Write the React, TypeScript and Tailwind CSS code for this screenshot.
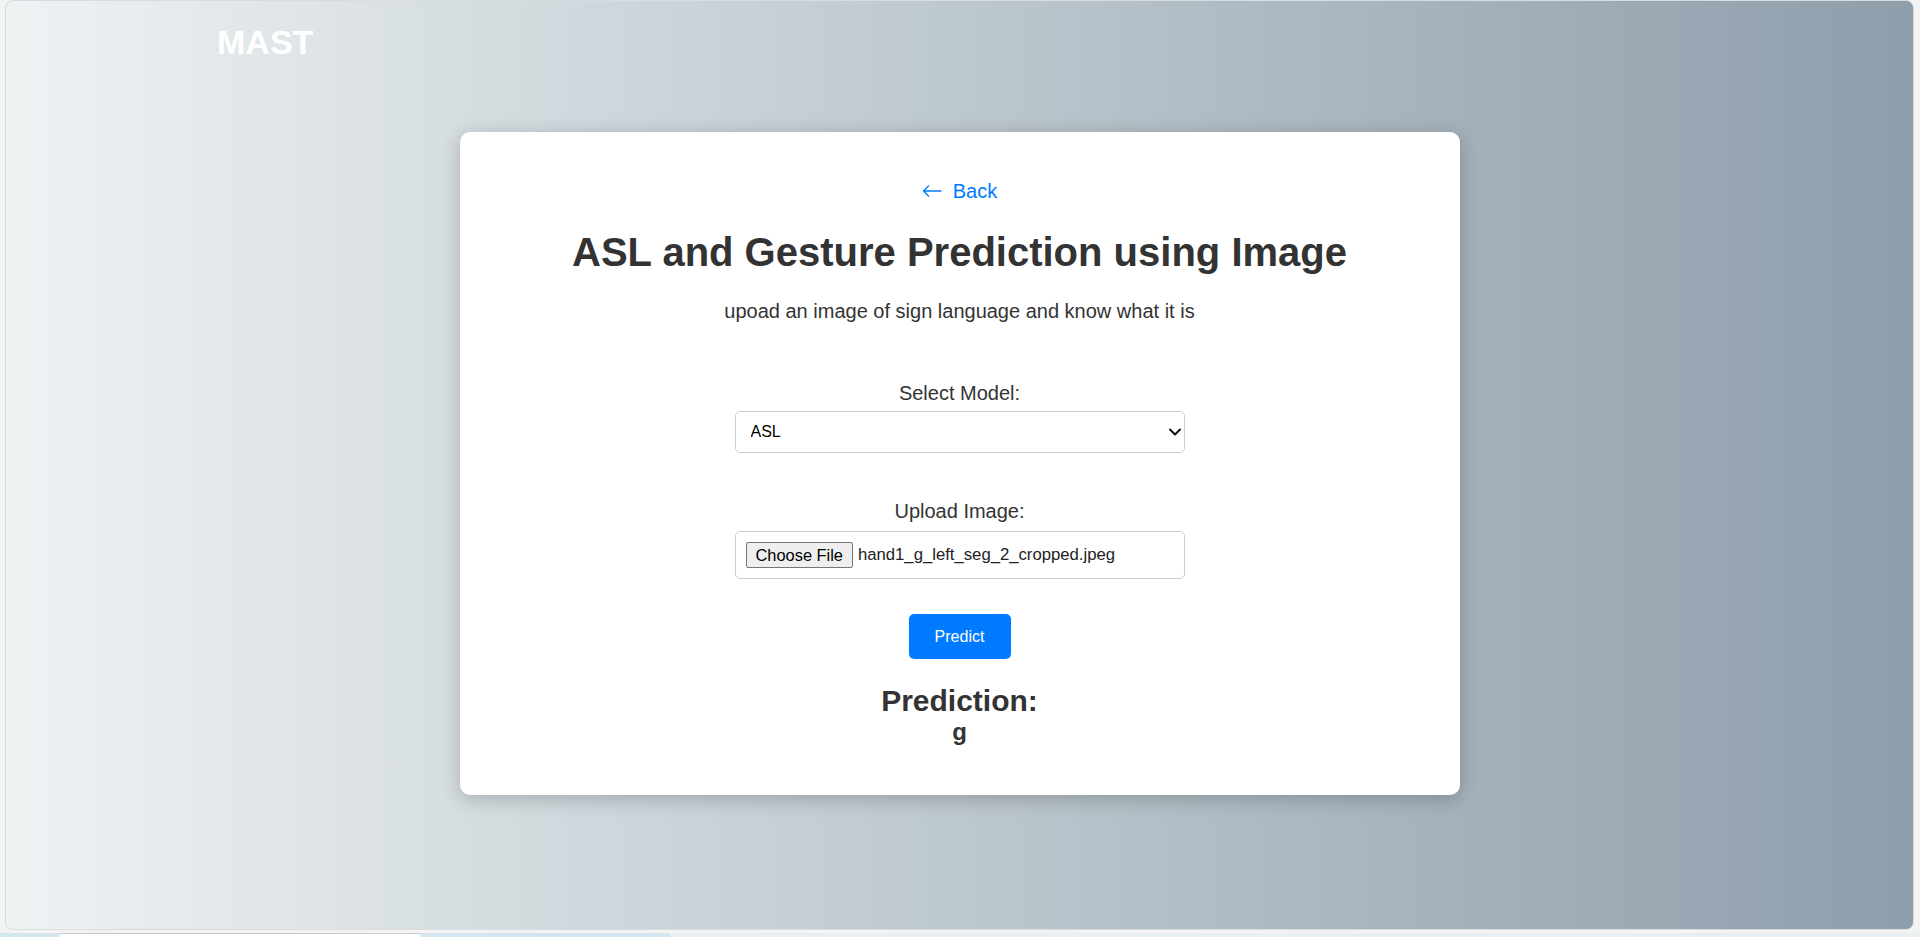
import { useState } from 'react'

const font = { fontFamily: '"Liberation Sans", Arial, sans-serif' }

function ChevronDown() {
  return (
    <svg width="12" height="8" viewBox="0 0 12 8" fill="none">
      <path d="M1 1.5l5 5 5-5" stroke="#111" strokeWidth="2" strokeLinecap="round" strokeLinejoin="round" />
    </svg>
  )
}

function ArrowLeft() {
  return (
    <svg width="20" height="12" viewBox="0 0 20 12" fill="none" className="mr-[11px]">
      <path d="M19 6H1.5M6.5 1L1.5 6l5 5" stroke="#007bff" strokeWidth="1.4" strokeLinecap="round" strokeLinejoin="round" />
    </svg>
  )
}

export default function App() {
  const [model, setModel] = useState('ASL')

  return (
    <div className="h-[937px] w-full overflow-hidden bg-[#f3f3f3] flex flex-col" style={font}>
      <div className="h-[930px] ml-[5px] mr-[6px] rounded-[8px] border border-[#d9dcdf] bg-linear-to-r from-[#eef2f3] to-[#8e9eab] flex flex-col">
        <header className="pt-[21px] pl-[211px]">
          <h1 className="text-[34px] leading-[40px] font-bold text-white">MAST</h1>
        </header>

        <main className="mt-[70px] mx-auto w-[1000px] bg-white rounded-[10px] shadow-[0_4px_20px_rgba(0,0,0,0.22)] pt-[47px] pb-[49px] flex flex-col items-center text-[#333]">
          <a href="#" className="flex items-center text-[20px] leading-[24px] text-[#007bff]">
            <ArrowLeft />
            Back
          </a>

          <h2 className="mt-[25px] text-[40px] leading-[48px] font-bold text-[#333]">
            ASL and Gesture Prediction using Image
          </h2>
          <p className="mt-[23px] text-[20px] leading-[24px]">upoad an image of sign language and know what it is</p>

          <label className="mt-[58px] text-[20px] leading-[24px]">Select Model:</label>
          <div className="relative mt-[6px] w-[450px] h-[42px]">
            <select
              value={model}
              onChange={(e) => setModel(e.target.value)}
              className="appearance-none w-full h-full border border-[#ccc] rounded-[5px] pl-[15px] text-[16px] text-black bg-white"
            >
              <option>ASL</option>
              <option>Gesture</option>
            </select>
            <span className="pointer-events-none absolute right-[4px] top-[17px]">
              <ChevronDown />
            </span>
          </div>

          <label className="mt-[46px] text-[20px] leading-[24px]">Upload Image:</label>
          <div className="mt-[8px] w-[450px] h-[48px] border border-[#ccc] rounded-[5px] px-[10px] flex items-center">
            <span className="h-[26px] px-[9px] flex items-center bg-[#efefef] border border-[#767676] rounded-[2px] text-[16.4px] text-black">
              Choose File
            </span>
            <span className="ml-[5px] text-[16.7px] text-[#222]">hand1_g_left_seg_2_cropped.jpeg</span>
          </div>

          <button className="mt-[35px] w-[102px] h-[45px] rounded-[5px] bg-[#007bff] text-white text-[16px]">
            Predict
          </button>

          <h3 className="mt-[25px] text-[30px] leading-[34px] font-bold text-[#333]">Prediction:</h3>
          <p className="text-[24px] leading-[28px] font-bold text-[#333]">g</p>
        </main>
      </div>

      <div className="mt-[3px] h-[4px] flex bg-[#e9eef1]">
        <div className="w-[60px] bg-[#d3e5ee]" />
        <div className="w-[360px] bg-white border-t border-[#c8c8c8]" />
        <div className="w-[250px] bg-[#d3e5ee]" />
      </div>
    </div>
  )
}
